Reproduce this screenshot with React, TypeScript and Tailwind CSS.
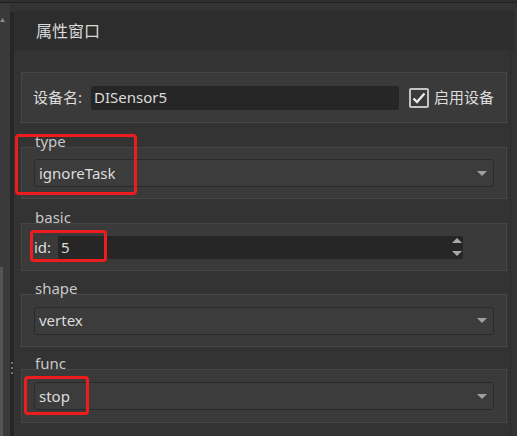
const font = 'font-["Noto_Sans","Noto_Sans_CJK_SC",sans-serif]';

function Arrow() {
  return (
    <svg width="10" height="5" viewBox="0 0 10 5" className="shrink-0">
      <path d="M0 0H10L5 5Z" fill="#a0a0a0" />
    </svg>
  );
}

function Combo({ value }: { value: string }) {
  return (
    <div className="flex h-[28px] w-full items-center justify-between rounded-[3px] border border-[#2a2a2a] bg-[#3c3c3c] pl-[4px] pr-[6px]">
      <span className="text-[15px] leading-none text-[#dcdcdc]">{value}</span>
      <Arrow />
    </div>
  );
}

function Group({ title, h, children }: { title: string; h: string; children: React.ReactNode }) {
  return (
    <div className="mt-[8px]">
      <div className="h-[20px] pl-[14px] text-[15px] leading-[20px] text-[#c8c8c8]">{title}</div>
      <div className={`-mt-[4px] flex items-center border border-[#464646] bg-[#3a3a3a] px-[12px] ${h}`}>
        {children}
      </div>
    </div>
  );
}

export default function App() {
  return (
    <div className={`relative flex h-[436px] w-[517px] flex-col overflow-hidden bg-[#333333] ${font}`}>
      {/* top edge */}
      <div className="h-[2px] bg-[#303030]" />
      <div className="h-[1px] bg-[#1f1f1f]" />

      <div className="flex flex-1">
        {/* left dock strip */}
        <div className="flex w-[10px] flex-col bg-[#3a3a3a]">
          <div className="h-[15px]" />
          <svg width="5" height="4" viewBox="0 0 5 4">
            <path d="M0 4L2.5 0L5 4Z" fill="#8a8a8a" />
          </svg>
          <div className="flex-1" />
          <div className="h-[169px] w-[3px] bg-[#555555]" />
        </div>
        {/* splitter */}
        <div className="flex w-[4px] flex-col bg-[#333333]">
          <div className="h-[9px]" />
          <div className="flex flex-1 flex-col items-center bg-[#262626] pt-[350px]">
            <div className="flex flex-col gap-[3px]">
              <div className="h-[2px] w-[2px] bg-[#777]" />
              <div className="h-[2px] w-[2px] bg-[#777]" />
              <div className="h-[2px] w-[2px] bg-[#777]" />
            </div>
          </div>
        </div>

        {/* main */}
        <div className="flex flex-1 flex-col">
          <div className="h-[8px]" />
          <div className="mr-[3px] flex h-[39px] items-center bg-[#2d2d2d] pl-[22px] text-[16px] text-[#dadada]">
            属性窗口
          </div>

          <div className="flex flex-1">
            <div className="flex-1 pl-[7px] pr-[3px] pt-[22px]">
              {/* device row */}
              <div className="flex h-[51px] items-center border border-[#464646] bg-[#3a3a3a] pl-[11px]">
                <span className="w-[58px] text-[15px] text-[#dcdcdc]">设备名:</span>
                <div className="flex h-[24px] w-[308px] items-center rounded-[2px] bg-[#262626] pl-[3px] text-[15px] text-[#dcdcdc]">
                  DISensor5
                </div>
                <div className="ml-[10px] flex h-[20px] w-[20px] items-center justify-center rounded-[2px] border-2 border-[#c4c4c4]">
                  <svg width="14" height="12" viewBox="0 0 14 12">
                    <path d="M1.5 6.5L5 10L12.5 1.5" fill="none" stroke="#ececec" strokeWidth="2.4" />
                  </svg>
                </div>
                <span className="ml-[5px] text-[15px] text-[#dcdcdc]">启用设备</span>
              </div>

              <Group title="type" h="h-[52px]">
                <Combo value="ignoreTask" />
              </Group>

              <Group title="basic" h="h-[48px]">
                <span className="w-[24px] text-[15px] text-[#dcdcdc]">id:</span>
                <div className="flex h-[23px] w-[405px] items-center justify-between rounded-[2px] bg-[#262626] pl-[3px] pr-[1px]">
                  <span className="text-[15px] text-[#dcdcdc]">5</span>
                  <div className="flex flex-col gap-[8px]">
                    <svg width="10" height="5" viewBox="0 0 10 5">
                      <path d="M0 5H10L5 0Z" fill="#a8a8a8" />
                    </svg>
                    <svg width="10" height="5" viewBox="0 0 10 5">
                      <path d="M0 0H10L5 5Z" fill="#a8a8a8" />
                    </svg>
                  </div>
                </div>
              </Group>

              <div className="-mt-[1px]">
                <Group title="shape" h="h-[53px]">
                  <Combo value="vertex" />
                </Group>
              </div>

              <div className="-mt-[2px]">
                <Group title="func" h="h-[54px]">
                  <Combo value="stop" />
                </Group>
              </div>
            </div>
            <div className="w-[1px] bg-[#2b2b2b]" />
            <div className="w-[6px]" />
          </div>
        </div>
      </div>

      {/* red annotation boxes */}
      <div className="absolute left-[15px] top-[134px] h-[61px] w-[122px] rounded-[4px] border-[3px] border-[#ee1c1c]" />
      <div className="absolute left-[30px] top-[230px] h-[32px] w-[77px] rounded-[4px] border-[3px] border-[#ee1c1c]" />
      <div className="absolute left-[24px] top-[376px] h-[39px] w-[65px] rounded-[4px] border-[3px] border-[#ee1c1c]" />
    </div>
  );
}
